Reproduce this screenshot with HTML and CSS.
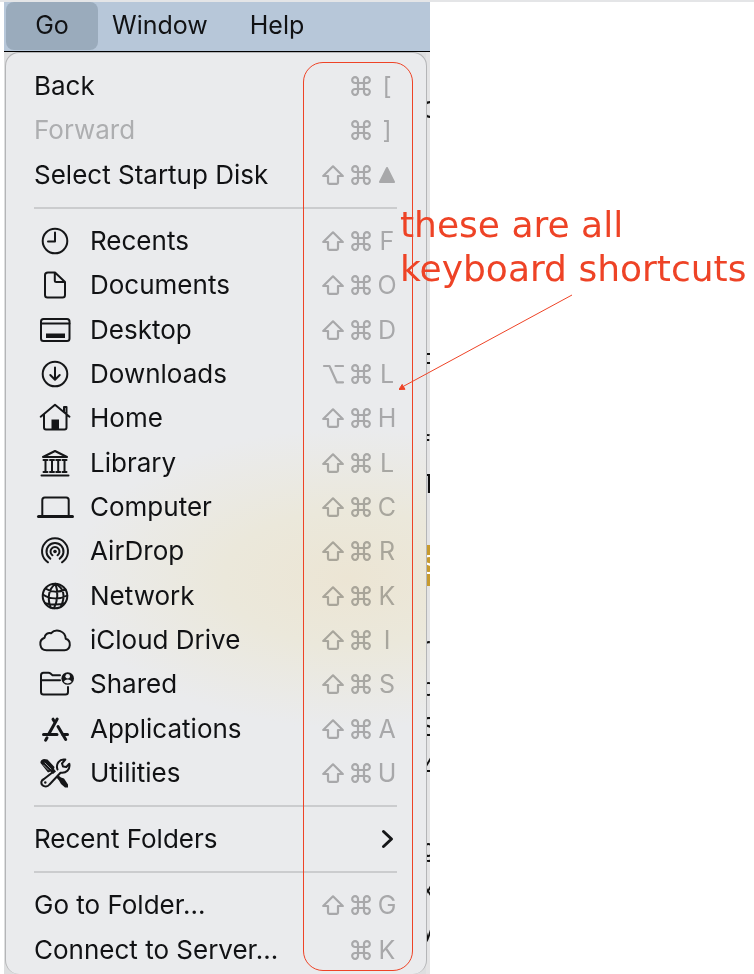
FILE: index.html
```html
<!DOCTYPE html>
<html lang="en">
<head>
<meta charset="utf-8">
<meta name="viewport" content="width=device-width, initial-scale=1">
<title>Go menu</title>
<link rel="stylesheet" href="styles.css">
</head>
<body>
<svg class="defs" aria-hidden="true">
  <symbol id="shift" viewBox="0 0 22 20"><path d="M11 1.3 20.8 11H16V17.6Q16 18.800 14.800 18.800H7.200Q6 18.800 6 17.600V11H1.200Z"/></symbol>
  <symbol id="cmd" viewBox="0 0 20 20"><path d="M7 7H13V13H7ZM7 7H4.200A2.900 2.900 0 1 1 7 4.200ZM13 7V4.200A2.900 2.900 0 1 1 15.800 7ZM13 13H15.800A2.900 2.900 0 1 1 13 15.800ZM7 13V15.800A2.900 2.900 0 1 1 4.200 13Z"/></symbol>
  <symbol id="option" viewBox="0 0 22 20"><path d="M2 2H7.500L14.800 18.300H21M13.500 2H21"/></symbol>
</svg>
<main class="stage">
  <section class="screen">
    <nav class="menubar">
      <button class="title open" type="button">Go</button>
      <button class="title" type="button">Window</button>
      <button class="title" type="button">Help</button>
    </nav>
    <div class="desktop">
      <div class="behind" aria-hidden="true">
        <span class="heading">c</span>
        <span>F</span><span></span><span>f</span><span>T</span><span></span><span class="marked">S</span><span></span><span>r</span><span>o</span><span>S</span><span>4</span><span></span><span>g</span><span>x</span><span>y</span><span>u</span>
      </div>
      <ul class="menu">
        <li><button class="item" type="button"><span class="label">Back</span><span class="keys"><svg class="mod"><use href="#cmd"/></svg><kbd>[</kbd></span></button></li>
        <li><button class="item" type="button" disabled><span class="label">Forward</span><span class="keys"><svg class="mod"><use href="#cmd"/></svg><kbd>]</kbd></span></button></li>
        <li><button class="item" type="button"><span class="label">Select Startup Disk</span><span class="keys"><svg class="mod wide"><use href="#shift"/></svg><svg class="mod"><use href="#cmd"/></svg><svg class="eject" viewBox="0 0 22 20"><path d="M11 3 18 17H4Z"/></svg></span></button></li>
        <li class="rule"></li>
        <li><button class="item" type="button"><svg class="icon" viewBox="0 0 38 32"><circle cx="19" cy="16" r="12.300"/><path d="M19 7.500V16.500H12"/></svg><span class="label">Recents</span><span class="keys"><svg class="mod wide"><use href="#shift"/></svg><svg class="mod"><use href="#cmd"/></svg><kbd>F</kbd></span></button></li>
        <li><button class="item" type="button"><svg class="icon" viewBox="0 0 38 32"><path d="M12 3.500H19L29 13V26Q29 28.500 26.500 28.500H11.500Q9 28.500 9 26V6Q9 3.500 12 3.500ZM18.800 3.500V11.500Q18.800 13 20.300 13H29"/></svg><span class="label">Documents</span><span class="keys"><svg class="mod wide"><use href="#shift"/></svg><svg class="mod"><use href="#cmd"/></svg><kbd>O</kbd></span></button></li>
        <li><button class="item" type="button"><svg class="icon" viewBox="0 0 38 32"><rect x="5" y="5" width="28.500" height="22" rx="2.500"/><path d="M5 9.500H33.500"/><rect class="fill" x="10" y="19.500" width="19" height="4.500"/></svg><span class="label">Desktop</span><span class="keys"><svg class="mod wide"><use href="#shift"/></svg><svg class="mod"><use href="#cmd"/></svg><kbd>D</kbd></span></button></li>
        <li><button class="item" type="button"><svg class="icon" viewBox="0 0 38 32"><circle cx="19" cy="16" r="12.300"/><path d="M19 9.500V21.500M14.300 17 19 21.700 23.700 17"/></svg><span class="label">Downloads</span><span class="keys"><svg class="mod wide"><use href="#option"/></svg><svg class="mod"><use href="#cmd"/></svg><kbd>L</kbd></span></button></li>
        <li><button class="item" type="button"><svg class="icon" viewBox="0 0 38 32"><path d="M4.700 14.700 19 2.800 33.500 14.700M8 12.500V25.500Q8 27.500 10 27.500H28.500Q30.500 27.500 30.500 25.500V12.500M28 9.500V5H30.500V12"/><rect class="fill" x="15.500" y="17.500" width="7.500" height="10"/></svg><span class="label">Home</span><span class="keys"><svg class="mod wide"><use href="#shift"/></svg><svg class="mod"><use href="#cmd"/></svg><kbd>H</kbd></span></button></li>
        <li><button class="item" type="button"><svg class="icon" viewBox="0 0 38 32"><path d="M7 10 19 4 31 10ZM9.500 13.500V24.500M16 13.500V24.500M22.200 13.500V24.500M28.500 13.500V24.500M7.500 13H11.500M14 13H18M20.200 13H24.200M26.500 13H30.500M7.500 25H11.500M14 25H18M20.200 25H24.200M26.500 25H30.500M5.500 28.500H32.500"/></svg><span class="label">Library</span><span class="keys"><svg class="mod wide"><use href="#shift"/></svg><svg class="mod"><use href="#cmd"/></svg><kbd>L</kbd></span></button></li>
        <li><button class="item" type="button"><svg class="icon" viewBox="0 0 38 32"><path d="M6.300 25V9Q6.300 6.500 8.800 6.500H30.200Q32.700 6.500 32.700 9V25"/><path class="bar" d="M2.500 25.500H36.500"/></svg><span class="label">Computer</span><span class="keys"><svg class="mod wide"><use href="#shift"/></svg><svg class="mod"><use href="#cmd"/></svg><kbd>C</kbd></span></button></li>
        <li><button class="item" type="button"><svg class="icon" viewBox="0 0 38 32"><circle class="fill" cx="19" cy="16.500" r="1.800"/><path d="M16.500 20.300A4.500 4.500 0 1 1 21.500 20.300M14.300 23.600A8.500 8.500 0 1 1 23.700 23.600M12 27.300A13 13 0 1 1 26 27.300"/></svg><span class="label">AirDrop</span><span class="keys"><svg class="mod wide"><use href="#shift"/></svg><svg class="mod"><use href="#cmd"/></svg><kbd>R</kbd></span></button></li>
        <li><button class="item" type="button"><svg class="icon" viewBox="0 0 38 32"><circle cx="19" cy="16" r="12.300"/><path d="M19.500 3.800C13 9 11 17 14.500 27.500M19.500 3.800C22 11 22 20 18 28.200M19.500 3.800C28 8 29.500 16 25 26.500M9.500 8.500C15 12.500 23 12.500 29.500 9.500M6.900 14.500C14 19.500 24 19.500 31.200 15.500M9 23.200C15 24.800 23 24.800 28.500 23.500"/></svg><span class="label">Network</span><span class="keys"><svg class="mod wide"><use href="#shift"/></svg><svg class="mod"><use href="#cmd"/></svg><kbd>K</kbd></span></button></li>
        <li><button class="item" type="button"><svg class="icon" viewBox="0 0 38 32"><path d="M10.500 26.300A6.500 6.500 0 0 1 8.600 13.700A5 5 0 0 1 15 9.200A8.500 8.500 0 0 1 29.700 14.800A5.900 5.900 0 0 1 28.500 26.300Z"/></svg><span class="label">iCloud Drive</span><span class="keys"><svg class="mod wide"><use href="#shift"/></svg><svg class="mod"><use href="#cmd"/></svg><kbd>I</kbd></span></button></li>
        <li><button class="item" type="button"><svg class="icon" viewBox="0 0 38 32"><path d="M24 7.200H16.500L14.500 5.500Q13.700 4.800 12.500 4.800H7.500Q5 4.800 5 7.300V24Q5 26.500 7.500 26.500H29.500Q32 26.500 32 24V19M5 12.300H24"/><circle class="fill" cx="31.700" cy="10.500" r="6.300"/><circle class="knock" cx="31.700" cy="8.300" r="2.300"/><path class="knock" d="M27.800 14.100Q28.500 11.600 31.700 11.600T35.600 14.100Q31.700 16.800 27.800 14.100Z"/></svg><span class="label">Shared</span><span class="keys"><svg class="mod wide"><use href="#shift"/></svg><svg class="mod"><use href="#cmd"/></svg><kbd>S</kbd></span></button></li>
        <li><button class="item" type="button"><svg class="icon" viewBox="0 0 38 32"><path class="thick" d="M21.200 6 12.500 21.500M17 6.200 19 9.500M22 13.500 29.700 26.500M7.500 21.500H21M26.500 21.500H31.500M11 24.800 9.600 27.200"/></svg><span class="label">Applications</span><span class="keys"><svg class="mod wide"><use href="#shift"/></svg><svg class="mod"><use href="#cmd"/></svg><kbd>A</kbd></span></button></li>
        <li><button class="item" type="button"><svg class="icon" viewBox="0 0 38 32"><path class="fill" d="M4.500 6Q4 3 8 2L11.500 2.500 18.500 10 18 12 20 14.500 17 17 14.500 14.500 12 15.500ZM22.500 18.500 25 20.500 28 21.500 32 27.500V30.500H29L25 27 23 23.500 20.500 20.500Z"/><path class="gleam" d="M9 6 15 12M7.500 8 12.500 13"/><path d="M21.500 12.500C19.500 7 23.500 1.500 29.300 2.600L26 6.500 27 9.500 30.300 10 33.300 6.800C34.500 12.500 30 16.700 24.500 15.700L13.500 27.500C10.500 31.500 4.500 29 5.500 24.500 6 23 7 22.500 8 22L17 15"/><circle class="fill" cx="9.300" cy="25.500" r="1.200"/></svg><span class="label">Utilities</span><span class="keys"><svg class="mod wide"><use href="#shift"/></svg><svg class="mod"><use href="#cmd"/></svg><kbd>U</kbd></span></button></li>
        <li class="rule"></li>
        <li><button class="item" type="button"><span class="label">Recent Folders</span><svg class="chevron" viewBox="0 0 22 22"><path d="M7.500 3.500 15.500 11 7.500 18.500"/></svg></button></li>
        <li class="rule"></li>
        <li><button class="item" type="button"><span class="label">Go to Folder...</span><span class="keys"><svg class="mod wide"><use href="#shift"/></svg><svg class="mod"><use href="#cmd"/></svg><kbd>G</kbd></span></button></li>
        <li><button class="item" type="button"><span class="label">Connect to Server...</span><span class="keys"><svg class="mod"><use href="#cmd"/></svg><kbd>K</kbd></span></button></li>
      </ul>
    </div>
  </section>
  <div class="outline"></div>
  <p class="note">these are all<br>keyboard shortcuts</p>
  <svg class="arrow" viewBox="0 0 174 98"><path d="M173 1 5 92"/><path class="head" d="M0 95.500 3.200 90.400 6 95.300Z"/></svg>
</main>
</body>
</html>
```
FILE: styles.css
```css
* { box-sizing: border-box; }
body { margin: 0; background: #fff; font-family: Inter, "Liberation Sans", sans-serif; color: #111214; }
.defs { position: absolute; width: 0; height: 0; }
.stage { position: relative; min-height: 100vh; display: flex; padding-left: 4px; border-top: 2px solid #e4e5e7; }
.screen { flex: 0 0 426px; display: flex; flex-direction: column; overflow: hidden; }
button { border: 0; margin: 0; background: none; font: inherit; color: inherit; }
.menubar { display: flex; height: 50px; padding: 0 2px; background: #b7c7d9; border-bottom: 1px solid #000; }
.title { height: 48px; padding: 0 14px 2px; border-radius: 8px; font-size: 25px; line-height: 44px; }
.title.open { width: 92px; background: #9aabbc; }
.title + .title + .title { margin-left: 14px; }
.desktop { position: relative; flex: 1; display: flex; background: #dedfe0; padding: 0 3px 0 1px; }
.behind {
  position: absolute; top: 0; right: 0; bottom: -16px; width: 4px; overflow: hidden;
  display: flex; flex-direction: column; background: #e4e4e5; font-size: 25px; line-height: 40px; color: #111;
  text-indent: -5px;
}
.behind span { flex: 1 1 40px; }
.behind .heading { flex: 0 0 256px; margin-top: 35px; font-size: 30px; }
.behind .marked { background: #c79a2e; color: #fff; }
.menu {
  position: relative; flex: 1; display: flex; flex-direction: column; margin: 0; padding: 11px 28px 2px; list-style: none;
  border: 1px solid #b4b5b7; border-bottom: 0; border-radius: 14px;
  background: radial-gradient(ellipse 280px 150px at 82% 57%, #ece5d4, #ebe8db 45%, rgba(234, 235, 237, 0)) #eaebed;
}
.menu li { flex: 1 1 44px; display: flex; }
.menu .rule { flex: 0 0 22px; align-items: center; padding-right: 1px; }
.rule::before { content: ""; flex: 1; height: 2px; background: #cbccce; }
.item { flex: 1; display: flex; align-items: center; padding: 0; text-align: left; font-size: 26px; line-height: 44px; }
.item:disabled .label { color: #adaeb0; }
.label { flex: 1; white-space: nowrap; }
.icon { width: 38px; height: 32px; margin: 0 16px 0 2px; fill: none; stroke: #151618; stroke-width: 2; stroke-linecap: round; stroke-linejoin: round; }
.icon .fill { fill: #151618; stroke: none; }
.icon .knock { fill: #e9eaec; stroke: none; }
.icon .bar { stroke-width: 3; }
.icon .thick { stroke-width: 3; }
.icon .gleam { stroke: #999a9c; stroke-width: 1; }
.keys { display: flex; align-items: center; font-size: 25px; color: #b7b7b7; mix-blend-mode: multiply; }
.mod { width: 20px; height: 20px; margin-right: 5px; fill: none; stroke: currentColor; stroke-width: 2.2; stroke-linejoin: round; stroke-linecap: round; }
.mod.wide { width: 22px; margin-right: 7px; }
kbd, .eject { width: 22px; font: inherit; text-align: center; }
.eject { height: 20px; fill: currentColor; stroke: currentColor; stroke-width: 2; stroke-linejoin: round; }
.chevron { width: 22px; height: 22px; fill: none; stroke: #151618; stroke-width: 3; stroke-linecap: round; stroke-linejoin: round; }
.outline { position: absolute; left: 303px; top: 60px; bottom: 3px; width: 110px; border: 1px solid #ee4326; border-radius: 20px; }
.note { position: absolute; left: 400px; top: 201px; margin: 0; font: 36px/44px "DejaVu Sans", sans-serif; color: #ee4326; white-space: nowrap; }
.arrow { position: absolute; left: 399px; top: 292px; width: 174px; height: 98px; fill: none; stroke: #ee4326; stroke-width: 1; }
.arrow .head { fill: #ee4326; }
```
